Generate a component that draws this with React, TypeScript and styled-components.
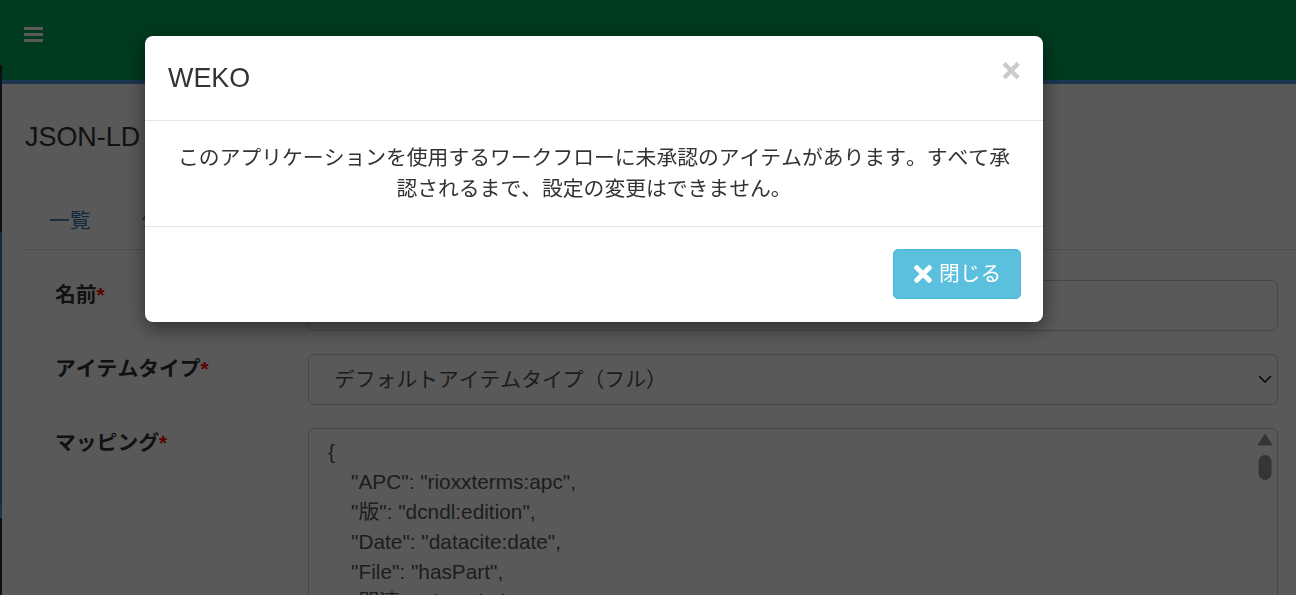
import React from "react";
import styled, { createGlobalStyle } from "styled-components";
import { FaTimes } from "react-icons/fa";

const Global = createGlobalStyle`
  html, body { margin: 0; padding: 0; height: 100%; overflow: hidden; }
  body {
    font-family: "Liberation Sans", "Noto Sans CJK JP", sans-serif;
    font-size: 20.8px;
    line-height: 1.5;
    color: #333;
    background: #fff;
  }
  * { box-sizing: border-box; }
`;

const Shell = styled.div`
  display: flex;
  height: 595px;
  overflow: hidden;
`;

const SideEdge = styled.aside`
  flex: 0 0 2px;
  background: linear-gradient(
    to bottom,
    #00a659 0 65px,
    #22303a 65px 232px,
    #3f7fa8 232px 505px,
    #4b9fd8 505px 518px,
    #22303a 518px
  );
`;

const Main = styled.main`
  flex: 1;
  min-width: 0;
  display: flex;
  flex-direction: column;
`;

const TopBar = styled.header`
  flex: 0 0 84px;
  background: #00a659;
  border-bottom: 4px solid #4a97e4;
  padding: 27px 0 0 22px;
`;

const MenuButton = styled.button`
  display: block;
  border: 0;
  padding: 0;
  background: none;
  color: #ffffff;
  line-height: 0;
`;

const BarsIcon = styled.svg`
  display: block;
  width: 19px;
  height: 15px;
  fill: currentColor;
`;

const Content = styled.div`
  padding: 33px 0 0 23px;
`;

const PageTitle = styled.h1`
  margin: 0;
  font-size: 26.9px;
  font-weight: 400;
  line-height: 40px;
  color: #333;
`;

const Tabs = styled.nav`
  display: flex;
  gap: 3px;
  margin-top: 43px;
  height: 50px;
  border-bottom: 1px solid #ddd;
`;

const Tab = styled.a`
  padding: 7px 24px 0;
  color: #337ab7;
  font-size: 20.8px;
  line-height: 28px;
`;

const Form = styled.form`
  display: flex;
  flex-direction: column;
  gap: 23px;
  padding: 30px 18px 0 0;
`;

const FieldRow = styled.div`
  display: grid;
  grid-template-columns: 283px 1fr;
`;

const FieldLabel = styled.label`
  margin-top: -1px;
  padding-left: 30px;
  font-weight: 700;
  font-kerning: none;
  line-height: 31px;
  color: #333;
`;

const Required = styled.span`
  color: #f00;
`;

const TextInput = styled.input`
  display: block;
  width: 100%;
  height: 51px;
  border: 1px solid #ccc;
  border-radius: 6px;
  background: #fff;
`;

const SelectBox = styled.div`
  position: relative;
`;

const Select = styled.select`
  display: block;
  width: 100%;
  height: 51px;
  padding: 0 0 0 25px;
  border: 1px solid #ccc;
  border-radius: 6px;
  background: #fff;
  color: #555;
  font: inherit;
  font-kerning: none;
  appearance: none;
`;

const SelectChevron = styled.svg`
  position: absolute;
  top: 21px;
  right: 6px;
  width: 14px;
  height: 8px;
  fill: none;
  stroke: #222;
  stroke-width: 1.7;
  pointer-events: none;
`;

const MappingBox = styled.div`
  position: relative;
  height: 400px;
`;

const MappingArea = styled.textarea`
  display: block;
  width: 100%;
  height: 100%;
  padding: 8px 40px 0 19px;
  border: 1px solid #ccc;
  border-radius: 6px;
  background: #fff;
  color: #555;
  font: inherit;
  line-height: 30px;
  resize: none;
  overflow: hidden;
  white-space: pre;
`;

const ScrollTrack = styled.svg`
  position: absolute;
  top: 6px;
  right: 5px;
  width: 16px;
  height: 48px;
`;

const Backdrop = styled.div`
  position: fixed;
  inset: 0;
  background: rgba(0, 0, 0, 0.65);
`;

const Dialog = styled.section`
  position: fixed;
  top: 36px;
  left: 145px;
  width: 898px;
  height: 286px;
  display: flex;
  flex-direction: column;
  background: #fff;
  border-radius: 8px;
  box-shadow: 0 6px 20px rgba(0, 0, 0, 0.5);
`;

const DialogHead = styled.div`
  flex: 0 0 85px;
  display: flex;
  justify-content: space-between;
  padding: 22px 23px 0;
  border-bottom: 1px solid #e5e5e5;
`;

const DialogTitle = styled.h4`
  margin: 0;
  font-size: 26.9px;
  font-weight: 400;
  line-height: 40px;
  color: #333;
`;

const CloseX = styled.button`
  align-self: flex-start;
  margin-top: -8px;
  margin-right: -2px;
  border: 0;
  padding: 0;
  background: none;
  font-family: "DejaVu Sans", sans-serif;
  font-size: 26px;
  font-weight: 700;
  line-height: 40px;
  color: #000;
  -webkit-text-stroke: 1.4px #000;
  opacity: 0.2;
`;

const DialogBody = styled.div`
  flex: 0 0 106px;
  padding: 21px 23px 0;
  border-bottom: 1px solid #e5e5e5;
  text-align: center;
  color: #333;
  font-kerning: none;
`;

const DialogFoot = styled.div`
  flex: 1;
  display: flex;
  justify-content: flex-end;
  align-items: flex-start;
  padding: 22px 22px 0;
`;

const CloseButton = styled.button`
  display: flex;
  align-items: center;
  gap: 3px;
  width: 128px;
  height: 50px;
  padding: 0 0 0 16px;
  border: 1px solid #46b8da;
  border-radius: 5px;
  background: #5bc0de;
  color: #fff;
  font: inherit;
  font-kerning: none;

  svg {
    flex: none;
    font-size: 26px;
  }
`;

const mapping = `{
    "APC": "rioxxterms:apc",
    "版": "dcndl:edition",
    "Date": "datacite:date",
    "File": "hasPart",
    "関連": "dct:relation",
}`;

export default function App() {
  return (
    <>
      <Global />
      <Shell>
        <SideEdge />
        <Main>
          <TopBar>
            <MenuButton aria-label="menu">
              <BarsIcon viewBox="0 0 19 15">
                <rect width="19" height="3" />
                <rect y="6" width="19" height="3" />
                <rect y="12" width="19" height="3" />
              </BarsIcon>
            </MenuButton>
          </TopBar>
          <Content>
            <PageTitle>JSON-LD マッピング</PageTitle>
            <Tabs>
              <Tab>一覧</Tab>
              <Tab>作成</Tab>
            </Tabs>
            <Form>
              <FieldRow>
                <FieldLabel>
                  名前<Required>*</Required>
                </FieldLabel>
                <TextInput />
              </FieldRow>
              <FieldRow>
                <FieldLabel>
                  アイテムタイプ<Required>*</Required>
                </FieldLabel>
                <SelectBox>
                  <Select defaultValue="full">
                    <option value="full">デフォルトアイテムタイプ（フル）</option>
                  </Select>
                  <SelectChevron viewBox="0 0 14 8">
                    <path d="M1 1 L7 7 L13 1" />
                  </SelectChevron>
                </SelectBox>
              </FieldRow>
              <FieldRow>
                <FieldLabel>
                  マッピング<Required>*</Required>
                </FieldLabel>
                <MappingBox>
                  <MappingArea readOnly value={mapping} />
                  <ScrollTrack viewBox="0 0 16 48">
                    <path d="M8 0 L15 11 H1 Z" fill="#999" stroke="#999" strokeLinejoin="round" />
                    <rect x="1.5" y="21" width="13" height="25" rx="6.5" fill="#999" />
                  </ScrollTrack>
                </MappingBox>
              </FieldRow>
            </Form>
          </Content>
        </Main>
      </Shell>
      <Backdrop />
      <Dialog role="dialog">
        <DialogHead>
          <DialogTitle>WEKO</DialogTitle>
          <CloseX aria-label="close">×</CloseX>
        </DialogHead>
        <DialogBody>
          このアプリケーションを使用するワークフローに未承認のアイテムがあります。すべて承認されるまで、設定の変更はできません。
        </DialogBody>
        <DialogFoot>
          <CloseButton>
            <FaTimes />
            閉じる
          </CloseButton>
        </DialogFoot>
      </Dialog>
    </>
  );
}
